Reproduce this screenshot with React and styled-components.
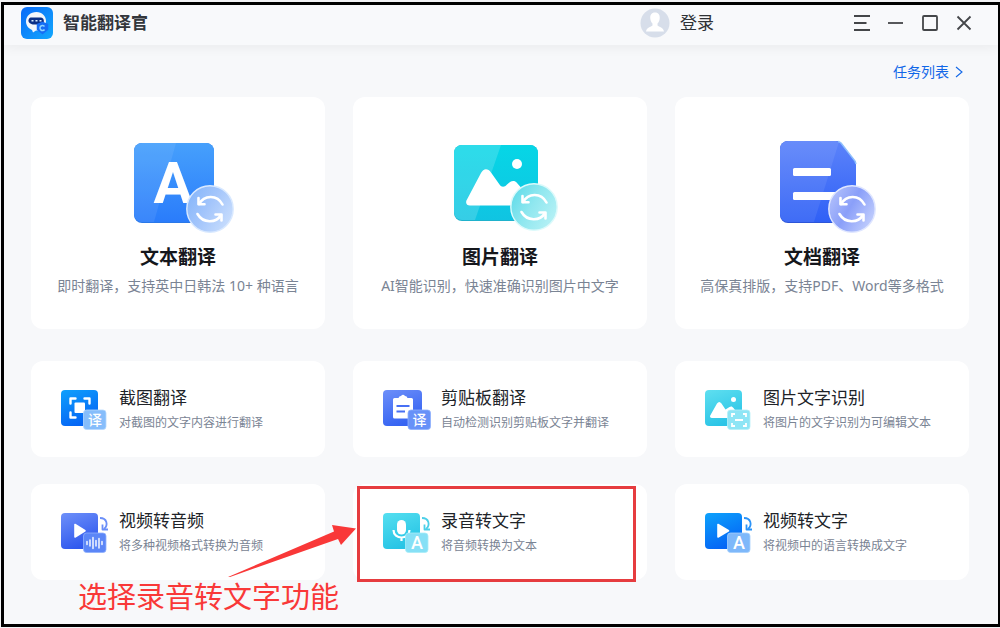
import styled, { createGlobalStyle } from 'styled-components';

const SyncBadge = ({ cx, cy, tint, id }) => (
    <g transform={`translate(${cx} ${cy})`}>
        <defs>
            <linearGradient id={id} x1="0" y1="0.2" x2="1" y2="0.8">
                <stop offset="0" stopColor={tint[0]} />
                <stop offset="0.45" stopColor={tint[1]} />
                <stop offset="1" stopColor={tint[2]} />
            </linearGradient>
        </defs>
        <circle r="23.2" fill={`url(#${id})`} stroke={tint[3]} strokeWidth="1.4" />
        <g fill="none" stroke="#fff" strokeWidth="2.6" strokeLinecap="round" strokeLinejoin="round">
            <path d="M-11 -5C-6 -14 7 -15 12.500 -4.500" />
            <path d="M-11.500 -11V-4.800H-5.500" />
            <path d="M-12.500 5C-7 14.500 6 14.500 11 6" />
            <path d="M5.500 5.500H11.500V11.500" />
        </g>
    </g>
);

const TextIcon = () => (
    <HeroIcon viewBox="0 0 120 100" aria-hidden="true">
        <defs>
            <linearGradient id="textBase" x1="0" y1="0" x2="0" y2="1">
                <stop offset="0" stopColor="#46a0fc" />
                <stop offset="1" stopColor="#2a7cfb" />
            </linearGradient>
        </defs>
        <rect x="16" y="6" width="80" height="80" rx="8" fill="#2a78e8" />
        <rect x="16" y="6" width="80" height="79" rx="8" fill="url(#textBase)" />
        <path d="M24 6H58L36 85H24A8 8 0 0 1 16 77V14A8 8 0 0 1 24 6Z" fill="#fff" opacity="0.08" />
        <text x="55" y="66" textAnchor="middle" fontFamily="Roboto, sans-serif" fontWeight="700" fontSize="58" fill="#fff">A</text>
        <SyncBadge id="textSync" cx={92} cy={72} tint={['#86b6fa', '#a3c5fb', '#cbdffd', '#d9e9ff']} />
    </HeroIcon>
);

const PictureIcon = () => (
    <HeroIcon viewBox="0 0 120 100" aria-hidden="true">
        <defs>
            <linearGradient id="picBase" x1="0" y1="0" x2="0" y2="1">
                <stop offset="0" stopColor="#06d6e6" />
                <stop offset="1" stopColor="#10c4e2" />
            </linearGradient>
        </defs>
        <rect x="14" y="8" width="84" height="76" rx="8" fill="#1fb2cc" />
        <rect x="14" y="8" width="84" height="75" rx="8" fill="url(#picBase)" />
        <path d="M22 8H61L35 83H22A8 8 0 0 1 14 75V16A8 8 0 0 1 22 8Z" fill="#fff" opacity="0.16" />
        <circle cx="77" cy="27" r="5" fill="#fff" />
        <path d="M30 68.500C26.500 68.500 25 65.500 27 62.500L41 36C43.500 31 48 31 51 35.500L59.500 47.500C61.500 50.500 64.500 50.500 67 47.500L70 45C72.500 43.500 75 43.500 77 46L92 63V68.500Z" fill="#fff" />
        <SyncBadge id="picSync" cx={94} cy={70} tint={['#5fdbe9', '#8fe7ef', '#b9f2f6', '#dcfafb']} />
    </HeroIcon>
);

const DocumentIcon = () => (
    <HeroIcon viewBox="0 0 120 100" aria-hidden="true">
        <defs>
            <linearGradient id="docBase" x1="0" y1="0" x2="0" y2="1">
                <stop offset="0" stopColor="#5c83fa" />
                <stop offset="1" stopColor="#2f60f6" />
            </linearGradient>
        </defs>
        <path d="M26 4H74Q77 4 79 6L93 24Q94 25.500 94 27V86H26A8 8 0 0 1 18 78V12A8 8 0 0 1 26 4Z" fill="#2c55d8" />
        <path d="M26 4H74Q77 4 79 6L93 24Q94 25.500 94 27V85H26A8 8 0 0 1 18 77V12A8 8 0 0 1 26 4Z" fill="url(#docBase)" />
        <path d="M26 4H74L77 5L52 85H26A8 8 0 0 1 18 77V12A8 8 0 0 1 26 4Z" fill="#fff" opacity="0.08" />
        <path d="M76 4.500Q78 5 79 6L93 24L94 27" fill="none" stroke="#8fc0fd" strokeWidth="1.500" />
        <rect x="31" y="31" width="38" height="8" rx="1.500" fill="#fff" />
        <rect x="31" y="55" width="45" height="8" rx="1.500" fill="#fff" />
        <SyncBadge id="docSync" cx={90} cy={72} tint={['#b3c1fb', '#8a9ff9', '#c6d2fd', '#dfe6ff']} />
    </HeroIcon>
);

const Tile = ({ id, colors, width = 37, children }) => (
    <FeatureIcon viewBox="0 -1 48 42" aria-hidden="true">
        <defs>
            <linearGradient id={id} x1="0" y1="0" x2="0.4" y2="1">
                <stop offset="0" stopColor={colors[0]} />
                <stop offset="1" stopColor={colors[1]} />
            </linearGradient>
        </defs>
        <rect x="0" y="1" width={width} height="36" rx="4" fill={`url(#${id})`} />
        {children}
    </FeatureIcon>
);

const Corner = ({ x = 22.5, fill, edge, label, children }) => (
    <g>
        <rect x={x} y="21" width="22.500" height="19.500" rx="3" fill={fill} stroke={edge} strokeWidth="0.8" />
        {label && (
            <text x={x + 11.5} y={label === 'A' ? 37 : 36} textAnchor="middle" fontFamily='Roboto, "Noto Sans CJK SC", sans-serif' fontWeight="500" fontSize={label === 'A' ? 18 : 14} fill="#fff">{label}</text>
        )}
        {children}
    </g>
);

const ConvertArrow = ({ color }) => (
    <g fill="none" stroke={color} strokeWidth="1.8" strokeLinejoin="round">
        <path d="M39 6C46 6 47.500 13 43 17" />
        <path d="M41.500 12.500V17.500H47" />
    </g>
);

const ScreenshotIcon = () => (
    <Tile id="shotBase" colors={['#0fa0fc', '#0566f5']}>
        <path d="M9.500 14.500V9.500H14.500M23.500 9.500H28.500V14.500M9.500 23.500V28.500H14.500" fill="none" stroke="#fff" strokeWidth="2.400" strokeLinecap="round" strokeLinejoin="round" />
        <rect x="13.500" y="13.500" width="10.500" height="10.500" rx="1" fill="#fff" />
        <Corner fill="#86bdfb" edge="#b5d8fe" label="译" />
    </Tile>
);

const ClipboardIcon = () => (
    <Tile id="clipBase" colors={['#6d8ff9', '#3563f2']} width={39}>
        <path d="M11.500 9H15.500Q16 7 18 7Q20 4.500 22 7Q24 7 24.500 9H28.500Q30 9 30 10.500V28Q30 29.500 28.500 29.500H11.500Q10 29.500 10 28V10.500Q10 9 11.500 9Z" fill="#fff" />
        <path d="M13.500 17H26.500M13.500 22.500H22" stroke="#4870f4" strokeWidth="2" />
        <Corner x={25} fill="#6791f8" edge="#8fb0fc" label="译" />
    </Tile>
);

const OcrIcon = () => (
    <Tile id="ocrBase" colors={['#5fdff0', '#2ac4e6']}>
        <circle cx="28.500" cy="10.500" r="2.500" fill="#fff" />
        <path d="M7 29C5 29 4.500 27.500 5.500 26L12 14.500C13.500 12.500 15 12.500 16.500 14.500L20.500 20.500L24.500 18C26 17 27.500 17.500 28.500 19L33 25V29Z" fill="#fff" />
        <Corner fill="#8ee5f5" edge="#b6f0f8">
            <path d="M27 28V25H30M38 25H41V28M27 34V37H30M38 37H41V34M30 31H38" fill="none" stroke="#fff" strokeWidth="1.800" />
        </Corner>
    </Tile>
);

const VideoAudioIcon = () => (
    <Tile id="vaBase" colors={['#6e90f9', '#3059ee']}>
        <path d="M14 12.500V25L24 18.800Z" fill="#fff" stroke="#fff" strokeWidth="1.600" strokeLinejoin="round" />
        <ConvertArrow color="#6b8ff8" />
        <Corner fill="#5b86f7" edge="#8fb0fc">
            <path d="M26 29.500V32.500M29 28V34M32 25.500V36.500M35 28.500V34M38 26.500V36M41 29.500V32.500" stroke="#fff" strokeWidth="1.400" strokeLinecap="round" />
        </Corner>
    </Tile>
);

const RecordingIcon = () => (
    <Tile id="recBase" colors={['#55dff0', '#27c4e5']}>
        <rect x="14" y="8" width="9" height="14.500" rx="4.500" fill="#fff" />
        <path d="M10.500 18C10.500 28 26.500 28 26.500 18M18.500 25.500V29" fill="none" stroke="#fff" strokeWidth="2.200" />
        <ConvertArrow color="#4ccfe8" />
        <Corner fill="#86e0f6" edge="#a8ecf8" label="A" />
    </Tile>
);

const VideoTextIcon = () => (
    <Tile id="vtBase" colors={['#0da2fc', '#0566f5']}>
        <path d="M13 12.500V25L23.500 18.800Z" fill="#fff" stroke="#fff" strokeWidth="1.600" strokeLinejoin="round" />
        <ConvertArrow color="#2b93f8" />
        <Corner fill="#7eb8fa" edge="#a7d0fd" label="A" />
    </Tile>
);

const Logo = () => (
    <svg width="32" height="32" viewBox="0 0 32 32" aria-hidden="true">
        <defs>
            <linearGradient id="logoBase" x1="0" y1="0" x2="1" y2="1">
                <stop offset="0" stopColor="#0a6af8" />
                <stop offset="1" stopColor="#12a8fd" />
            </linearGradient>
        </defs>
        <rect width="32" height="32" rx="6" fill="url(#logoBase)" />
        <path d="M15.500 5C9.500 5 5 9 5 14.500C5 18.500 7.500 21.500 11 23L12 25.500L15 23.500C21 24 25 20 25 14C25 9 21 5 15.500 5Z" fill="#f3f6fb" />
        <path d="M10.500 10.500H19.500C24 10.500 24 17.500 19.500 17.500H13C9 17.500 7 15 7.500 13C8 11 9 10.500 10.500 10.500Z" fill="#0b2f86" />
        <path d="M10.500 13.800H12.500M14.500 13.800H16.500M18.500 13.800H20.500" stroke="#d7ecff" strokeWidth="1.600" />
        <path d="M21.500 15.500L26.500 17.500V22.500L21.500 26.500L16.500 22.500V17.500Z" fill="#176df4" stroke="#176df4" strokeWidth="1.500" strokeLinejoin="round" />
        <path d="M23.500 19.500A2.500 2.500 0 1 0 23.500 22.500" fill="none" stroke="#8fd4ff" strokeWidth="1.500" />
    </svg>
);

const Avatar = () => (
    <svg width="30" height="30" viewBox="0 0 30 30" aria-hidden="true">
        <circle cx="15" cy="15" r="14.500" fill="#d7deea" />
        <path d="M15 4.500C11.500 4.500 10 7 10.300 10.500C10.500 13 11.500 14.500 12.500 15.500V17.500C11 19 6.500 19.500 6 23.500H24C23.500 19.500 19 19 17.500 17.500V15.500C18.500 14.500 19.500 13 19.700 10.500C20 7 18.500 4.500 15 4.500Z" fill="#fff" />
    </svg>
);

const windowControls = [
    { label: '菜单', path: 'M0 1H16M0 8H12.500M0 15H16' },
    { label: '最小化', path: 'M0 8H15' },
    { label: '最大化', path: 'M2 1H14Q15 1 15 2V14Q15 15 14 15H2Q1 15 1 14V2Q1 1 2 1Z' },
    { label: '关闭', path: 'M1.500 1.500L14.500 14.500M14.500 1.500L1.500 14.500' },
];

const heroes = [
    { title: '文本翻译', text: '即时翻译，支持英中日韩法 10+ 种语言', Icon: TextIcon },
    { title: '图片翻译', text: 'AI智能识别，快速准确识别图片中文字', Icon: PictureIcon },
    { title: '文档翻译', text: '高保真排版，支持PDF、Word等多格式', Icon: DocumentIcon },
];

const features = [
    { title: '截图翻译', text: '对截图的文字内容进行翻译', Icon: ScreenshotIcon },
    { title: '剪贴板翻译', text: '自动检测识别剪贴板文字并翻译', Icon: ClipboardIcon },
    { title: '图片文字识别', text: '将图片的文字识别为可编辑文本', Icon: OcrIcon },
    { title: '视频转音频', text: '将多种视频格式转换为音频', Icon: VideoAudioIcon },
    { title: '录音转文字', text: '将音频转换为文本', Icon: RecordingIcon, marked: true },
    { title: '视频转文字', text: '将视频中的语言转换成文字', Icon: VideoTextIcon },
];

const App = () => {
    return (
        <>
            <GlobalStyle />
            <Window>
                <Header>
                    <Logo />
                    <AppName>智能翻译官</AppName>
                    <Login type="button">
                        <Avatar />
                        登录
                    </Login>
                    <Controls>
                        {windowControls.map(({ label, path }) => (
                            <ControlButton type="button" aria-label={label} key={label}>
                                <svg width="16" height="16" viewBox="0 0 16 16">
                                    <path d={path} fill="none" stroke="#444649" strokeWidth="1.8" />
                                </svg>
                            </ControlButton>
                        ))}
                    </Controls>
                </Header>
                <Main>
                    <TaskLink href="#tasks">
                        任务列表
                        <svg width="8" height="12" viewBox="0 0 8 12" aria-hidden="true">
                            <path d="M1 1L7 6L1 11" fill="none" stroke="currentColor" strokeWidth="1.1" />
                        </svg>
                    </TaskLink>
                    <HeroGrid>
                        {heroes.map(({ title, text, Icon }) => (
                            <HeroCard type="button" key={title}>
                                <Icon />
                                <HeroTitle>{title}</HeroTitle>
                                <HeroText>{text}</HeroText>
                            </HeroCard>
                        ))}
                    </HeroGrid>
                    <FeatureGrid>
                        {features.map(({ title, text, Icon, marked }) => (
                            <Cell key={title}>
                                <FeatureCard type="button">
                                    <Icon />
                                    <FeatureLabel>
                                        <FeatureTitle>{title}</FeatureTitle>
                                        <FeatureText>{text}</FeatureText>
                                    </FeatureLabel>
                                </FeatureCard>
                                {marked && (
                                    <>
                                        <Marker />
                                        <Pointer viewBox="0 0 134 58" aria-hidden="true">
                                            <path d="M3 55L109 9.500L107 3L131 6.500L116 23L113 17L5 55Z" fill="#f93838" />
                                        </Pointer>
                                    </>
                                )}
                            </Cell>
                        ))}
                    </FeatureGrid>
                    <Hint>选择录音转文字功能</Hint>
                </Main>
            </Window>
        </>
    );
};

const GlobalStyle = createGlobalStyle`
    * {
        box-sizing: border-box;
    }

    body {
        margin: 0;
        background-color: #f3f4f6;
        font-family: "Noto Sans", "Noto Sans CJK SC", sans-serif;
    }

    button {
        padding: 0;
        border: 0;
        background: transparent;
        font-family: inherit;
        cursor: pointer;
    }

    svg {
        display: block;
        flex-shrink: 0;
    }
`

const Window = styled.div`
    display: flex;
    flex-direction: column;
    min-height: calc(100vh - 3px);
    margin: 2px 0 1px 1px;
    border: 3px solid #000;
    border-right-width: 2px;
    background-color: #f7f8fa;
`

const Header = styled.header`
    display: flex;
    align-items: center;
    height: 40px;
    padding: 0 26px 4px 17px;
    background-color: #f8f9fb;
    box-shadow: 0 2px 12px rgba(0, 0, 0, 0.06);
`

const AppName = styled.h1`
    margin: 0 auto 0 10px;
    font-size: 17px;
    line-height: 24px;
    font-weight: 700;
    color: #33363b;
`

const Login = styled.button`
    display: flex;
    align-items: center;
    gap: 10px;
    margin-right: 140px;
    font-size: 17px;
    line-height: 24px;
    color: #2f3236;
`

const Controls = styled.div`
    display: flex;
    gap: 18px;
`

const ControlButton = styled.button`
    width: 16px;
    height: 16px;
`

const Main = styled.main`
    display: flex;
    flex-direction: column;
    padding: 16px 29px 10px 27px;
`

const TaskLink = styled.a`
    display: flex;
    align-items: center;
    align-self: flex-end;
    gap: 6px;
    margin: 0 6px 14px 0;
    font-size: 14px;
    line-height: 22px;
    color: #1167e8;
    text-decoration: none;
`

const HeroGrid = styled.section`
    display: grid;
    grid-template-columns: repeat(3, minmax(0, 1fr));
    gap: 28px;
    margin-bottom: 32px;
`

const FeatureGrid = styled(HeroGrid)`
    row-gap: 27px;
    margin-bottom: 0;
`

const HeroCard = styled.button`
    display: flex;
    flex-direction: column;
    align-items: center;
    padding: 40px 0 32px;
    border-radius: 12px;
    background-color: #fff;
`

const HeroIcon = styled.svg`
    width: 120px;
    height: 100px;
`

const HeroTitle = styled.span`
    margin-top: 6px;
    font-size: 19px;
    line-height: 28px;
    font-weight: 700;
    color: #15171c;
`

const HeroText = styled.span`
    margin-top: 4px;
    font-size: 14px;
    line-height: 22px;
    color: #7a8494;
`

const Cell = styled.div`
    position: relative;
`

const FeatureCard = styled.button`
    display: flex;
    align-items: center;
    gap: 10px;
    width: 100%;
    height: 96px;
    padding: 0 20px 0 30px;
    border-radius: 12px;
    background-color: #fff;
    text-align: left;
`

const FeatureIcon = styled.svg`
    width: 48px;
    height: 42px;
`

const FeatureLabel = styled.span`
    display: flex;
    flex-direction: column;
    gap: 2px;
    padding-top: 2px;
`

const FeatureTitle = styled.span`
    font-size: 17px;
    line-height: 24px;
    color: #202328;
`

const FeatureText = styled.span`
    font-size: 12px;
    line-height: 22px;
    color: #7a8494;
`

const Marker = styled.div`
    position: absolute;
    top: 2px;
    right: 11px;
    bottom: -2px;
    left: 4px;
    border: 3px solid #e63c3f;
    pointer-events: none;
`

const Pointer = styled.svg`
    position: absolute;
    top: 38px;
    left: -128px;
    width: 134px;
    height: 58px;
    pointer-events: none;
`

const Hint = styled.p`
    margin: 0 0 0 47px;
    font-size: 29px;
    line-height: 34px;
    color: #f93838;
`

export default App;
